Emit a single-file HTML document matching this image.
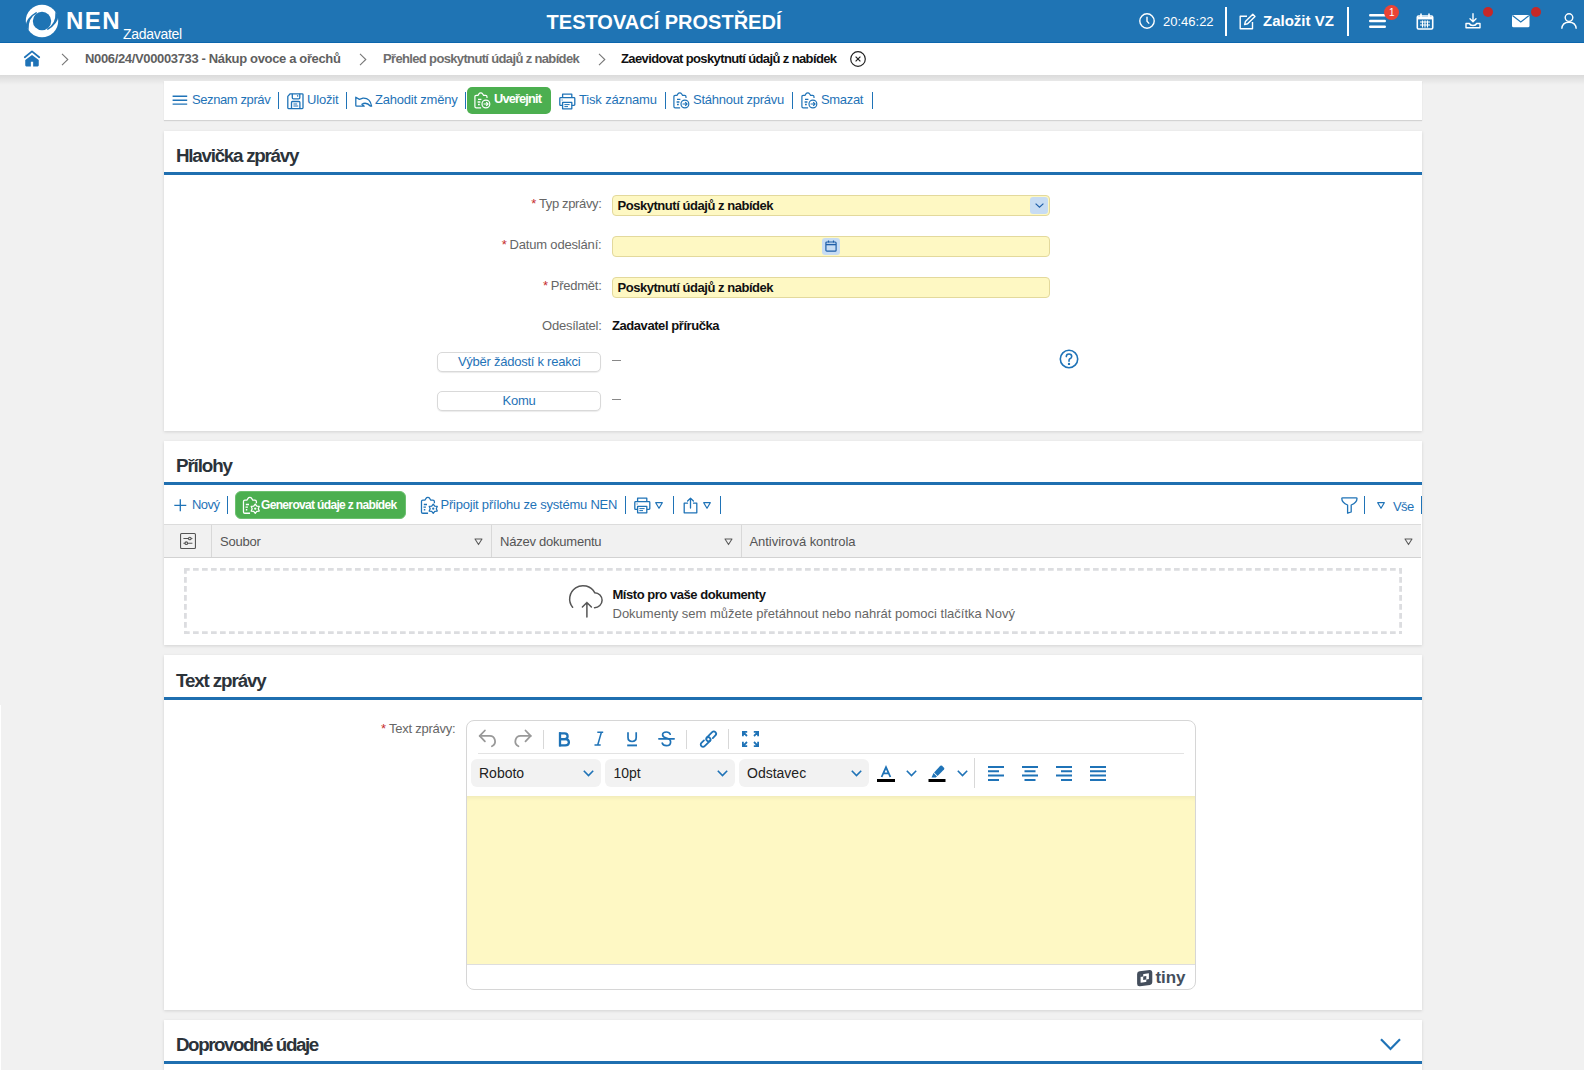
<!DOCTYPE html>
<html><head><meta charset="utf-8">
<style>
*{box-sizing:border-box}
html,body{margin:0;padding:0}
body{width:1584px;height:1070px;overflow:hidden;background:#f1f1f1;font-family:"Liberation Sans",sans-serif;position:relative}
.a{position:absolute}
.t{position:absolute;white-space:nowrap;line-height:1}
svg{position:absolute;overflow:visible}
#hdr{left:0;top:0;width:1584px;height:43px;background:#1f74b4;border-bottom:1px solid #0b66ad}
#bc{left:0;top:43px;width:1584px;height:32px;background:#fff}
#bcsh{left:0;top:75px;width:1584px;height:10px;background:linear-gradient(rgba(0,0,0,.095),rgba(0,0,0,0))}
.panel{position:absolute;left:164px;width:1258px;background:#fff;box-shadow:0 1px 3px rgba(0,0,0,.13)}
.ptitle{position:absolute;left:12px;top:0;white-space:nowrap;line-height:1;font-size:18.8px;font-weight:bold;color:#2c333a;letter-spacing:-0.7px}
.pline{position:absolute;left:0;top:41px;width:100%;height:3px;background:#1f6fb0}
.blue{color:#1f73b7}
.tb{font-size:13px;color:#1f73b7}
.vd{position:absolute;width:1.2px;background:#1f73b7}
.lbl{font-size:13px;color:#666}
.ast{color:#c62d2d;font-size:13px;margin-right:3px;position:relative;top:0}
.inp{position:absolute;left:612px;width:438px;height:21px;background:#fef8c3;border:1px solid #e3d99c;border-radius:4px}
.ival{left:617.5px;font-size:13px;font-weight:bold;color:#111;letter-spacing:-0.46px}
.btn{position:absolute;left:436.8px;width:164.6px;height:20px;border:1px solid #d9d9d9;border-radius:5px;background:#fff;box-shadow:0 1px 1px rgba(0,0,0,.08);font-size:13px;color:#1f73b7;text-align:center;line-height:17px;letter-spacing:-0.25px;white-space:nowrap}
.th{font-size:13px;color:#555}
.sel{position:absolute;top:758.5px;height:28.5px;background:#f2f2f2;border-radius:6px}
.ed{top:765.8px;font-size:14px;color:#222}
.chev{position:absolute;top:769.5px;fill:none;stroke:#1f73b7;stroke-width:1.6}
</style></head><body>
<div id="hdr" class="a">
  <svg style="left:25px;top:4px" width="34" height="34" viewBox="0 0 34 34">
    <circle cx="17" cy="17" r="16.2" fill="#fff"/>
    <circle cx="17" cy="17" r="9.2" fill="#1f74b4"/>
    <path d="M0.5 22.3Q1.15 14.05 11.2 8.1L12.3 9.1Q2.9 13.65 3.6 26.3Z" fill="#1f74b4"/>
    <path d="M33.5 11.7Q32.85 19.95 22.8 25.9L21.7 24.9Q31.1 20.35 30.4 7.7Z" fill="#1f74b4"/>
  </svg>
  <div class="t" style="left:66px;top:8.7px;font-size:24px;font-weight:bold;color:#fff;letter-spacing:1.5px">NEN</div>
  <div class="t" style="left:123px;top:27.4px;font-size:14px;color:#fff;letter-spacing:-0.3px">Zadavatel</div>
  <div class="t" style="left:546.6px;top:11.5px;font-size:20px;font-weight:bold;color:#fff">TESTOVACÍ PROSTŘEDÍ</div>
  <!-- clock -->
  <svg style="left:1139px;top:13px" width="16" height="16" viewBox="0 0 16 16" fill="none" stroke="#fff" stroke-width="1.4">
    <circle cx="8" cy="8" r="7.2"/><path d="M8 3.8V8.2L10.2 10.6"/>
  </svg>
  <div class="t" style="left:1163px;top:14.7px;font-size:13px;color:#fff">20:46:22</div>
  <div class="a" style="left:1225px;top:7px;width:2px;height:29px;background:#fff"></div>
  <svg style="left:1239px;top:13px" width="17" height="17" viewBox="0 0 17 17" fill="none" stroke="#fff" stroke-width="1.4" stroke-linejoin="round">
    <path d="M8 3.2H1.2V15.8H13.5V9"/><path d="M13.8 1.2L16 3.4L8.6 10.8L5.6 11.6L6.4 8.6Z"/>
  </svg>
  <div class="t" style="left:1263px;top:13px;font-size:15px;font-weight:bold;color:#fff">Založit VZ</div>
  <div class="a" style="left:1347px;top:7px;width:2px;height:29px;background:#fff"></div>
  <!-- menu -->
  <svg style="left:1369px;top:14px" width="17" height="14" viewBox="0 0 17 14" stroke="#fff" stroke-width="2.4" stroke-linecap="round">
    <path d="M1.2 1.3H15.8M1.2 7H15.8M1.2 12.7H15.8"/>
  </svg>
  <div class="a" style="left:1384.2px;top:5.2px;width:15px;height:15px;border-radius:50%;background:#ea4335;color:#fff;font-size:10px;font-weight:normal;text-align:center;line-height:15px">1</div>
  <!-- calendar -->
  <svg style="left:1416px;top:13px" width="18" height="17" viewBox="0 0 18 17" fill="none" stroke="#fff">
    <rect x="1.3" y="3" width="15.4" height="13" rx="1.2" stroke-width="1.6"/>
    <path d="M5 0.5V4M13 0.5V4" stroke-width="1.6"/>
    <path d="M1.5 5.2H16.5" stroke-width="2.4"/>
    <path d="M4 9H14M4 12H14M6.5 7.5V14.5M9 7.5V14.5M11.5 7.5V14.5" stroke-width="1.1"/>
  </svg>
  <!-- download -->
  <svg style="left:1465px;top:13px" width="16" height="16" viewBox="0 0 16 16" fill="none" stroke="#fff" stroke-width="1.4" stroke-linecap="round" stroke-linejoin="round">
    <path d="M8 0.8V8.5M5 5.8L8 8.8L11 5.8"/><path d="M1 10.5V14.8H15V10.5H11.5Q11 12.5 8 12.5Q5 12.5 4.5 10.5H1"/>
  </svg>
  <div class="a" style="left:1483px;top:7px;width:10px;height:10px;border-radius:50%;background:#c62828"></div>
  <!-- mail -->
  <svg style="left:1511.5px;top:14.8px" width="18" height="12.5" viewBox="0 0 18 12.5">
    <rect x="0" y="0" width="17.5" height="12.2" rx="1.5" fill="#fff"/>
    <path d="M0.8 0.8L8.75 7L16.7 0.8" stroke="#1f74b4" stroke-width="1.2" fill="none"/>
  </svg>
  <div class="a" style="left:1531px;top:7px;width:10px;height:10px;border-radius:50%;background:#c62828"></div>
  <!-- user -->
  <svg style="left:1561px;top:13px" width="16" height="16" viewBox="0 0 16 16" fill="none" stroke="#fff" stroke-width="1.4">
    <circle cx="8" cy="4.6" r="3.8"/><path d="M0.8 15.8Q1.2 9.2 8 9.2Q14.8 9.2 15.2 15.8"/>
  </svg>
</div>

<div id="bc" class="a">
  <svg style="left:24px;top:7px" width="17" height="17" viewBox="0 0 17 17">
    <path d="M0.8 7.2L8 1.4L15.2 7.2" stroke="#1f73b7" stroke-width="1.8" fill="none" stroke-linecap="round" stroke-linejoin="round"/>
    <path d="M1.25 10.1L8 5.1L14.75 10.1V15.3Q14.75 16.4 13.7 16.4H9.15V11.8H6.85V16.4H2.3Q1.25 16.4 1.25 15.3Z" fill="#1f73b7"/>
  </svg>
  <svg style="left:61px;top:10px" width="8" height="13" viewBox="0 0 8 13" fill="none" stroke="#777" stroke-width="1.1"><path d="M1 0.8L6.8 6.5L1 12.2"/></svg>
  <div class="t" style="left:85px;top:8.9px;font-size:13px;font-weight:bold;color:#5f5f5f;letter-spacing:-0.35px">N006/24/V00003733 - Nákup ovoce a ořechů</div>
  <svg style="left:359px;top:10px" width="8" height="13" viewBox="0 0 8 13" fill="none" stroke="#777" stroke-width="1.1"><path d="M1 0.8L6.8 6.5L1 12.2"/></svg>
  <div class="t" style="left:383px;top:8.9px;font-size:13px;font-weight:bold;color:#6e6e6e;letter-spacing:-0.65px">Přehled poskytnutí údajů z nabídek</div>
  <svg style="left:597.5px;top:10px" width="8" height="13" viewBox="0 0 8 13" fill="none" stroke="#777" stroke-width="1.1"><path d="M1 0.8L6.8 6.5L1 12.2"/></svg>
  <div class="t" style="left:621px;top:8.9px;font-size:13px;font-weight:bold;color:#111;letter-spacing:-0.62px">Zaevidovat poskytnutí údajů z nabídek</div>
  <svg style="left:850px;top:8px" width="16" height="16" viewBox="0 0 16 16" fill="none" stroke="#222" stroke-width="1.2"><circle cx="8" cy="8" r="7.3"/><path d="M5.6 5.6L10.4 10.4M10.4 5.6L5.6 10.4"/></svg>
</div>

<div id="bcsh" class="a"></div>
<!-- toolbar panel -->
<div class="panel" style="top:81px;height:39px;box-shadow:0 1px 1px rgba(0,0,0,.12)"></div>
<svg style="left:172px;top:95px" width="16" height="11" viewBox="0 0 16 11" stroke="#1f73b7" stroke-width="1.4"><path d="M0.6 1.3H15.2M0.6 5.2H15.2M0.6 9.1H15.2"/></svg>
<div class="t tb" style="left:192px;top:93px;letter-spacing:-0.4px">Seznam zpráv</div>
<div class="vd" style="left:278px;top:92px;height:16.6px"></div>
<svg style="left:287px;top:92.5px" width="17" height="17" viewBox="0 0 17 17" fill="none" stroke="#1f73b7" stroke-width="1.3" stroke-linejoin="round">
  <path d="M0.8 3.4L3.2 0.8H15.2Q16 0.8 16 1.6V14.8Q16 15.6 15.2 15.6H1.6Q0.8 15.6 0.8 14.8Z"/>
  <path d="M5.3 0.8V4.8Q5.3 5.8 6.3 5.8H11.8Q12.8 5.8 12.8 4.8V0.8"/>
  <path d="M10.6 2.2V3.6"/>
  <path d="M4.5 15.6V9.4Q4.5 8.5 5.4 8.5H12Q12.9 8.5 12.9 9.4V15.6"/>
  <path d="M6.4 11H10.2M6.4 13H11.2" stroke-width="1.1"/>
</svg>
<div class="t tb" style="left:307px;top:93px;letter-spacing:-0.2px">Uložit</div>
<div class="vd" style="left:346px;top:92px;height:16.6px"></div>
<svg style="left:354.5px;top:95.5px" width="18" height="11" viewBox="0 0 18 11" fill="none" stroke="#1f73b7" stroke-width="1.3" stroke-linejoin="round">
  <path d="M0.8 1.2V9.4Q0.8 10.2 1.6 10.2H9.2L6.9 8.2Q11.4 5.6 15.6 10.2H16.6Q15.2 1.8 8 2.2L4.4 3.4Z"/>
</svg>
<div class="t tb" style="left:375px;top:93px;letter-spacing:-0.21px">Zahodit změny</div>
<div class="vd" style="left:464.8px;top:92px;height:16.6px"></div>
<div class="a" style="left:466.5px;top:87px;width:84px;height:26.5px;border-radius:5px;background:#4caf50"></div>
<svg style="left:472.5px;top:91.3px" width="18" height="18" viewBox="0 0 18 17" fill="none" stroke="#fff" stroke-width="1.2" stroke-linejoin="round">
  <path d="M8.1 16.3H3.2Q1.9 16.3 1.9 15V5.2Q1.9 3.9 3.2 3.9H5L6.1 2.2Q6.6 1.4 7.8 1.4Q9 1.4 9.5 2.2L10.6 3.9H12.6Q14 3.9 14 5.3V6.6"/>
  <path d="M7.8 3.5V3.6" stroke-width="1.2"/>
  <path d="M5 7.9H8.4M4.6 10.5H7.4M5 13H6.8" stroke-width="1.4"/>
  <circle cx="12.9" cy="12.5" r="3.9"/><path d="M10.6 12.5H15.2M13.2 10.6L15.1 12.5L13.2 14.4" stroke-width="1.1"/>
</svg>
<div class="t" style="left:494px;top:93.1px;font-size:12.8px;font-weight:bold;color:#fff;letter-spacing:-0.85px">Uveřejnit</div>
<svg style="left:559px;top:92.5px" width="17" height="17" viewBox="0 0 17 17" fill="none" stroke="#1f73b7" stroke-width="1.3" stroke-linejoin="round">
  <path d="M3.6 4.6V1.2H12.8V4.6"/>
  <path d="M3.6 12.4H1.6Q0.8 12.4 0.8 11.6V5.4Q0.8 4.6 1.6 4.6H15Q15.8 4.6 15.8 5.4V11.6Q15.8 12.4 15 12.4H12.8"/>
  <path d="M3.6 9.4H12.8V15.8H3.6Z"/><path d="M5.4 11.6H10.6M5.4 13.6H9" stroke-width="1"/><path d="M2.6 7H3.6" stroke-width="1"/>
</svg>
<div class="t tb" style="left:579px;top:93px;letter-spacing:-0.16px">Tisk záznamu</div>
<div class="vd" style="left:665px;top:92px;height:16.6px"></div>
<svg style="left:672px;top:91.3px" width="18" height="18" viewBox="0 0 18 17" fill="none" stroke="#1f73b7" stroke-width="1.2" stroke-linejoin="round">
  <path d="M8.1 16.3H3.2Q1.9 16.3 1.9 15V5.2Q1.9 3.9 3.2 3.9H5L6.1 2.2Q6.6 1.4 7.8 1.4Q9 1.4 9.5 2.2L10.6 3.9H12.6Q14 3.9 14 5.3V6.6"/>
  <path d="M7.8 3.5V3.6" stroke-width="1.2"/>
  <path d="M5 7.9H8.4M4.6 10.5H7.4M5 13H6.8" stroke-width="1.4"/>
  <circle cx="12.9" cy="12.5" r="3.9"/><path d="M10.6 12.5H15.2M13.2 10.6L15.1 12.5L13.2 14.4" stroke-width="1.1"/>
</svg>
<div class="t tb" style="left:693px;top:93px;letter-spacing:-0.24px">Stáhnout zprávu</div>
<div class="vd" style="left:792px;top:92px;height:16.6px"></div>
<svg style="left:799.5px;top:91.3px" width="18" height="18" viewBox="0 0 18 17" fill="none" stroke="#1f73b7" stroke-width="1.2" stroke-linejoin="round">
  <path d="M8.1 16.3H3.2Q1.9 16.3 1.9 15V5.2Q1.9 3.9 3.2 3.9H5L6.1 2.2Q6.6 1.4 7.8 1.4Q9 1.4 9.5 2.2L10.6 3.9H12.6Q14 3.9 14 5.3V6.6"/>
  <path d="M7.8 3.5V3.6" stroke-width="1.2"/>
  <path d="M5 7.9H8.4M4.6 10.5H7.4M5 13H6.8" stroke-width="1.4"/>
  <circle cx="12.9" cy="12.5" r="3.9"/><path d="M10.6 12.5H15.2M13.2 10.6L15.1 12.5L13.2 14.4" stroke-width="1.1"/>
</svg>
<div class="t tb" style="left:821px;top:93px;letter-spacing:-0.32px">Smazat</div>
<div class="vd" style="left:871.5px;top:92px;height:16.6px"></div>

<!-- panel 1 -->
<div class="panel" style="top:131px;height:300px"><div class="pline"></div></div>
<div class="t ptitle" style="left:176px;top:146.6px;letter-spacing:-1.25px">Hlavička zprávy</div>
<div class="t lbl" style="right:982.5px;top:196.9px;letter-spacing:-0.35px"><span class="ast">*</span>Typ zprávy:</div>
<div class="t lbl" style="right:982.5px;top:237.7px;letter-spacing:-0.18px"><span class="ast">*</span>Datum odeslání:</div>
<div class="t lbl" style="right:982.5px;top:278.5px;letter-spacing:-0.25px"><span class="ast">*</span>Předmět:</div>
<div class="t lbl" style="right:982.5px;top:318.9px;letter-spacing:-0.25px">Odesílatel:</div>
<div class="inp" style="top:195px"></div>
<div class="inp" style="top:236px"></div>
<div class="inp" style="top:277px"></div>
<div class="a" style="left:1030px;top:197px;width:18px;height:17px;border-radius:3px;background:#c7dcf3"></div>
<svg style="left:1035px;top:203px" width="9" height="5" viewBox="0 0 9 5" fill="none" stroke="#1f5fa8" stroke-width="1.2"><path d="M0.6 0.6L4.5 4.2L8.4 0.6"/></svg>
<div class="a" style="left:822px;top:238px;width:18px;height:17px;border-radius:3px;background:#c7dcf3"></div>
<svg style="left:825px;top:240px" width="12" height="12" viewBox="0 0 12 12" fill="none" stroke="#1f5fa8" stroke-width="1.2"><rect x="0.9" y="2" width="10.2" height="9.2" rx="1"/><path d="M1 4.6H11" stroke-width="1.4"/><path d="M3.5 0.4V2.6M8.5 0.4V2.6"/></svg>
<div class="t ival" style="top:198.7px">Poskytnutí údajů z nabídek</div>
<div class="t ival" style="top:281px">Poskytnutí údajů z nabídek</div>
<div class="t" style="left:612px;top:318.9px;font-size:13px;font-weight:bold;color:#111;letter-spacing:-0.43px">Zadavatel příručka</div>
<div class="btn" style="top:352px">Výběr žádostí k reakci</div>
<div class="btn" style="top:391px">Komu</div>
<div class="a" style="left:612px;top:360px;width:9px;height:1px;background:#888"></div>
<div class="a" style="left:612px;top:399px;width:9px;height:1px;background:#888"></div>
<svg style="left:1059px;top:349px" width="20" height="20" viewBox="0 0 20 20" fill="none" stroke="#1f73b7" stroke-width="1.6"><circle cx="10" cy="10" r="8.7"/><path d="M7.3 7.6Q7.3 5 10 5Q12.7 5 12.7 7.4Q12.7 9 10.9 9.8Q10 10.3 10 11.8V12.2" stroke-linecap="round"/><circle cx="10" cy="14.9" r="0.5" fill="#1f73b7" stroke-width="1.4"/></svg>
<!-- panel 2 -->
<div class="panel" style="top:441px;height:204px"><div class="pline"></div></div>
<div class="t ptitle" style="left:176px;top:457.2px;letter-spacing:-1.12px">Přílohy</div>
<svg style="left:173.5px;top:498.5px" width="13" height="13" viewBox="0 0 13 13" stroke="#1f73b7" stroke-width="1.3"><path d="M6.3 0.3V12.3M0.3 6.3H12.3"/></svg>
<div class="t tb" style="left:192px;top:498.2px;letter-spacing:-0.58px">Nový</div>
<div class="vd" style="left:227px;top:496px;height:17.5px"></div>
<div class="a" style="left:234.5px;top:491px;width:171px;height:27.5px;border-radius:6px;background:#4caf50;border:1px solid #6cc06f"></div>
<svg style="left:241.5px;top:496px" width="18" height="18" viewBox="0 0 17 17" fill="none" stroke="#fff" stroke-width="1.2" stroke-linejoin="round">
  <path d="M7.6 16.3H2.7Q1.4 16.3 1.4 15V5.3Q1.4 4 2.7 4H4.6L5.7 2.2Q6.2 1.4 7.4 1.4Q8.6 1.4 9.1 2.2L10.2 4H12.2Q13.6 4 13.6 5.4V6.8"/>
  <path d="M7.4 3.5V3.6" stroke-width="1.2"/>
  <path d="M3.6 8H6.6M3.3 10.5H5.6M3.6 13H5" stroke-width="1.4"/>
  <path d="M12.50 7.60 L13.95 9.49 L16.31 9.80 L15.40 12.00 L16.31 14.20 L13.95 14.51 L12.50 16.40 L11.05 14.51 L8.69 14.20 L9.60 12.00 L8.69 9.80 L11.05 9.49Z" stroke-width="1.2"/><circle cx="12.5" cy="12" r="1.1" fill="#fff" stroke="none"/>
</svg>
<div class="t" style="left:261px;top:499px;font-size:12px;font-weight:bold;color:#fff;letter-spacing:-0.66px">Generovat údaje z nabídek</div>
<svg style="left:420px;top:496px" width="18" height="18" viewBox="0 0 17 17" fill="none" stroke="#1f73b7" stroke-width="1.2" stroke-linejoin="round">
  <path d="M7.6 16.3H2.7Q1.4 16.3 1.4 15V5.3Q1.4 4 2.7 4H4.6L5.7 2.2Q6.2 1.4 7.4 1.4Q8.6 1.4 9.1 2.2L10.2 4H12.2Q13.6 4 13.6 5.4V6.8"/>
  <path d="M7.4 3.5V3.6" stroke-width="1.2"/>
  <path d="M3.6 8H6.6M3.3 10.5H5.6M3.6 13H5" stroke-width="1.4"/>
  <path d="M12.50 7.60 L13.95 9.49 L16.31 9.80 L15.40 12.00 L16.31 14.20 L13.95 14.51 L12.50 16.40 L11.05 14.51 L8.69 14.20 L9.60 12.00 L8.69 9.80 L11.05 9.49Z" stroke-width="1.2"/><circle cx="12.5" cy="12" r="1.1" fill="#1f73b7" stroke="none"/>
</svg>
<div class="t tb" style="left:440.5px;top:498.2px;letter-spacing:-0.22px">Připojit přílohu ze systému NEN</div>
<div class="vd" style="left:625px;top:496px;height:17.5px"></div>
<svg style="left:633.5px;top:496.8px" width="17" height="17" viewBox="0 0 17 17" fill="none" stroke="#1f73b7" stroke-width="1.3" stroke-linejoin="round">
  <path d="M3.6 4.6V1.2H12.8V4.6"/>
  <path d="M3.6 12.4H1.6Q0.8 12.4 0.8 11.6V5.4Q0.8 4.6 1.6 4.6H15Q15.8 4.6 15.8 5.4V11.6Q15.8 12.4 15 12.4H12.8"/>
  <path d="M3.6 9.4H12.8V15.8H3.6Z"/><path d="M5.4 11.6H10.6M5.4 13.6H9" stroke-width="1"/><path d="M2.6 7H3.6" stroke-width="1"/>
</svg>
<svg style="left:654.5px;top:501.5px" width="8" height="7" viewBox="0 0 8 7" fill="none" stroke="#1f73b7" stroke-width="1.2" stroke-linejoin="round"><path d="M0.7 0.7H7.3L4 6.3Z"/></svg>
<div class="vd" style="left:673px;top:496px;height:17.5px"></div>
<svg style="left:683px;top:496.5px" width="15" height="17" viewBox="0 0 15 17" fill="none" stroke="#1f73b7" stroke-width="1.3" stroke-linejoin="round" stroke-linecap="round">
  <path d="M4.5 6.2H1.2V15.8H13.8V6.2H10.5"/><path d="M7.5 11V1.2M4.6 4L7.5 1.1L10.4 4"/>
</svg>
<svg style="left:702.5px;top:501.5px" width="8" height="7" viewBox="0 0 8 7" fill="none" stroke="#1f73b7" stroke-width="1.2" stroke-linejoin="round"><path d="M0.7 0.7H7.3L4 6.3Z"/></svg>
<div class="vd" style="left:720px;top:496px;height:17.5px"></div>
<svg style="left:1340.5px;top:496.5px" width="17" height="17" viewBox="0 0 17 17" fill="none" stroke="#1f73b7" stroke-width="1.3" stroke-linejoin="round">
  <path d="M0.8 1.5Q0.8 0.8 1.6 0.8H15.2Q16 0.8 16 1.5Q16 5.5 10.2 8V15L6.6 16.2V8Q0.8 5.5 0.8 1.5Z"/>
</svg>
<div class="vd" style="left:1364px;top:496px;height:18px"></div>
<svg style="left:1377px;top:501.5px" width="8" height="7" viewBox="0 0 8 7" fill="none" stroke="#1f73b7" stroke-width="1.2" stroke-linejoin="round"><path d="M0.7 0.7H7.3L4 6.3Z"/></svg>
<div class="t tb" style="left:1393px;top:499.8px;letter-spacing:-0.6px">Vše</div>
<div class="vd" style="left:1420.5px;top:496px;height:18px"></div>
<!-- table header -->
<div class="a" style="left:164px;top:524px;width:1257px;height:34px;background:#f1f1f1;border-top:1px solid #dcdcdc;border-bottom:1px solid #d2d2d2"></div>
<div class="a" style="left:211px;top:525px;width:1px;height:32px;background:#d8d8d8"></div>
<div class="a" style="left:491px;top:525px;width:1px;height:32px;background:#d8d8d8"></div>
<div class="a" style="left:741px;top:525px;width:1px;height:32px;background:#d8d8d8"></div>
<svg style="left:179.8px;top:532.6px" width="16" height="16" viewBox="0 0 16 16" fill="none" stroke="#555" stroke-width="1.1">
  <rect x="0.55" y="0.55" width="14.9" height="14.9" rx="1"/><path d="M3.4 5.5H12.4M3.4 10.2H12.4"/><circle cx="9.8" cy="5.5" r="1.3" fill="#f1f1f1"/><circle cx="6.3" cy="10.2" r="1.3" fill="#f1f1f1"/>
</svg>
<div class="t th" style="left:220px;top:534.8px;letter-spacing:-0.2px">Soubor</div>
<div class="t th" style="left:500px;top:534.8px;letter-spacing:-0.23px">Název dokumentu</div>
<div class="t th" style="left:749.5px;top:534.8px;letter-spacing:-0.05px">Antivirová kontrola</div>
<svg style="left:473.5px;top:537.5px" width="9" height="8" viewBox="0 0 9 8" fill="none" stroke="#5a5a5a" stroke-width="1.05" stroke-linejoin="round"><path d="M1 0.9H8L4.5 6.6Z"/></svg>
<svg style="left:723.5px;top:537.5px" width="9" height="8" viewBox="0 0 9 8" fill="none" stroke="#5a5a5a" stroke-width="1.05" stroke-linejoin="round"><path d="M1 0.9H8L4.5 6.6Z"/></svg>
<svg style="left:1403.5px;top:537.5px" width="9" height="8" viewBox="0 0 9 8" fill="none" stroke="#5a5a5a" stroke-width="1.05" stroke-linejoin="round"><path d="M1 0.9H8L4.5 6.6Z"/></svg>
<!-- dropzone -->
<svg style="left:184px;top:568px" width="1218" height="66" viewBox="0 0 1218 66" fill="none" stroke="#dcdde0" stroke-width="2.8" stroke-dasharray="5.7 3.3">
  <path d="M0 1.4H1218M1.4 0V66M0 64.6H1218M1216.6 0V66"/>
</svg>
<svg style="left:569px;top:584.5px" width="34" height="33" viewBox="0 0 34 33" fill="none" stroke="#555" stroke-width="1.5" stroke-linecap="round">
  <path d="M3.6 22.3A13.3 13.3 0 1 1 25.7 7.7A7.5 7.5 0 0 1 25.5 22.7"/>
  <path d="M17.9 32V17.5M13.4 22L17.9 17.5L22.4 22"/>
</svg>
<div class="t" style="left:612.5px;top:587.9px;font-size:13px;font-weight:bold;color:#111;letter-spacing:-0.46px">Místo pro vaše dokumenty</div>
<div class="t" style="left:612.5px;top:607.3px;font-size:13px;color:#666">Dokumenty sem můžete přetáhnout nebo nahrát pomoci tlačítka Nový</div>
<!-- panel 3 -->
<div class="panel" style="top:655px;height:355px"><div class="pline" style="top:42px"></div></div>
<div class="t ptitle" style="left:176px;top:672.3px;letter-spacing:-1.12px">Text zprávy</div>
<div class="t lbl" style="right:1128.5px;top:722.3px;letter-spacing:-0.23px"><span class="ast">*</span>Text zprávy:</div>
<!-- editor -->
<div class="a" style="left:466px;top:720px;width:730px;height:270px;border:1px solid #d6d6d6;border-radius:8px;background:#fff;overflow:hidden">
  <div class="a" style="left:0;top:75px;width:728px;height:169px;background:#fef8c4;box-shadow:inset 0 4px 4px -2px rgba(0,0,0,.06)"></div>
  <div class="a" style="left:0;top:243px;width:728px;height:1px;background:#dedede"></div>
</div>
<div class="a" style="left:478px;top:753px;width:706px;height:1px;background:#e3e3e3"></div>
<svg style="left:478px;top:729px" width="19" height="19" viewBox="0 0 19 19" fill="none" stroke="#999" stroke-width="1.8" stroke-linecap="round" stroke-linejoin="round"><path d="M6.9 1.5L1.7 6.9L6.9 12.3"/><path d="M1.7 6.9H11.3A5.4 5.4 0 0 1 13.9 17.2"/></svg>
<svg style="left:513.8px;top:729px" width="19" height="19" viewBox="0 0 19 19" fill="none" stroke="#999" stroke-width="1.8" stroke-linecap="round" stroke-linejoin="round"><path d="M11.5 1.5L16.7 6.9L11.5 12.3"/><path d="M16.7 6.9H7.1A5.4 5.4 0 0 0 4.5 17.2"/></svg>
<div class="a" style="left:542.5px;top:729.5px;width:1px;height:19px;background:#d8d8d8"></div>
<svg style="left:558px;top:731.6px" width="13" height="16" viewBox="0 0 13 16" fill="none" stroke="#1f73b7" stroke-width="2.3"><path d="M2 0.3V14.4"/><path d="M1 1.3H6.6Q9.6 1.3 9.6 4.2Q9.6 7.1 6.6 7.1H2"/><path d="M2 7.1H7.2Q10.9 7.1 10.9 10.2Q10.9 13.3 7.2 13.3H1"/></svg>
<svg style="left:593.5px;top:731.3px" width="10" height="15" viewBox="0 0 10 15" fill="none" stroke="#1f73b7" stroke-width="1.5"><path d="M3.3 1.2H9.2M0.5 14H6.7M7.4 1.2L3.7 14"/></svg>
<svg style="left:626px;top:731.5px" width="12" height="15" viewBox="0 0 12 15" fill="none" stroke="#1f73b7" stroke-width="1.7"><path d="M2 0.3V5.6Q2 9.5 6.1 9.5Q10.2 9.5 10.2 5.6V0.3"/><path d="M1.2 13.4H11" stroke-width="1.9"/></svg>
<svg style="left:657.5px;top:731px" width="17" height="16" viewBox="0 0 17 16" fill="none" stroke="#1f73b7" stroke-width="1.7" stroke-linecap="round"><path d="M12.2 3.2Q11.3 1 8.4 1Q4.6 1 4.6 3.8Q4.6 6.2 8.4 7Q12.6 7.9 12.6 10.9Q12.6 14.6 8.4 14.6Q5 14.6 4.2 12"/><path d="M0.9 7.8H16.1"/></svg>
<div class="a" style="left:686px;top:729.5px;width:1px;height:19px;background:#d8d8d8"></div>
<svg style="left:697.6px;top:728.6px" width="21" height="21" viewBox="0 0 21 21" fill="none" stroke="#1f73b7" stroke-width="1.8" stroke-linecap="round"><path d="M14.82 9.04L17.4 6.46A2.3 2.3 0 0 0 14.14 3.2L8.98 8.36A2.3 2.3 0 0 0 12.24 11.62"/><path d="M5.98 11.36L3.4 13.94A2.3 2.3 0 0 0 6.66 17.2L11.82 12.04A2.3 2.3 0 0 0 8.56 8.78"/></svg>
<div class="a" style="left:727.8px;top:729px;width:1px;height:20px;background:#d8d8d8"></div>
<svg style="left:742px;top:731px" width="17" height="16" viewBox="0 0 17 16" fill="none" stroke="#1f73b7" stroke-width="1.8"><path d="M0.9 5.2V0.9H5.2M0.9 0.9L5 5"/><path d="M16.1 5.2V0.9H11.8M16.1 0.9L12 5"/><path d="M0.9 10.8V15.1H5.2M0.9 15.1L5 11"/><path d="M16.1 10.8V15.1H11.8M16.1 15.1L12 11"/></svg>
<!-- row 2 -->
<div class="sel" style="left:471px;width:130px"></div>
<div class="sel" style="left:605px;width:130px"></div>
<div class="sel" style="left:739px;width:130px"></div>
<div class="t ed" style="left:479px">Roboto</div>
<div class="t ed" style="left:613.5px">10pt</div>
<div class="t ed" style="left:747px">Odstavec</div>
<svg class="chev" style="left:583px"  width="11" height="7" viewBox="0 0 11 7"><path d="M0.8 0.8L5.5 5.6L10.2 0.8"/></svg>
<svg class="chev" style="left:716.5px" width="11" height="7" viewBox="0 0 11 7"><path d="M0.8 0.8L5.5 5.6L10.2 0.8"/></svg>
<svg class="chev" style="left:851px" width="11" height="7" viewBox="0 0 11 7"><path d="M0.8 0.8L5.5 5.6L10.2 0.8"/></svg>
<svg style="left:877px;top:766px" width="18" height="16" viewBox="0 0 18 16" fill="none"><path d="M4.6 11L9 1.3L13.4 11M6.4 7.4H11.6" stroke="#1f73b7" stroke-width="1.8"/><rect x="0" y="13" width="18" height="3" fill="#000"/></svg>
<svg class="chev" style="left:905.5px" width="11" height="7" viewBox="0 0 11 7"><path d="M0.8 0.8L5.5 5.6L10.2 0.8"/></svg>
<svg style="left:928px;top:765px" width="18" height="17" viewBox="0 0 18 17"><path d="M12.3 0.8Q13.2 0 14.1 0.8L16 2.7Q16.8 3.6 16 4.5L9.6 10.9L6.1 7.4Z" fill="#1f73b7"/><path d="M5.5 8.1L9 11.6L7.6 12.6H3.5Z" fill="#1f73b7"/><rect x="0.5" y="14" width="17" height="3" fill="#000"/></svg>
<svg class="chev" style="left:956.5px" width="11" height="7" viewBox="0 0 11 7"><path d="M0.8 0.8L5.5 5.6L10.2 0.8"/></svg>
<div class="a" style="left:974px;top:757.5px;width:1px;height:30px;background:#d8d8d8"></div>
<svg style="left:988px;top:765.5px" width="16" height="15" viewBox="0 0 16 15" stroke="#1f73b7" stroke-width="2"><path d="M0 1H16M0 5.3H11M0 9.6H16M0 13.9H11"/></svg>
<svg style="left:1022px;top:765.5px" width="16" height="15" viewBox="0 0 16 15" stroke="#1f73b7" stroke-width="2"><path d="M0 1H16M2.5 5.3H13.5M0 9.6H16M2.5 13.9H13.5"/></svg>
<svg style="left:1056px;top:765.5px" width="16" height="15" viewBox="0 0 16 15" stroke="#1f73b7" stroke-width="2"><path d="M0 1H16M5 5.3H16M0 9.6H16M5 13.9H16"/></svg>
<svg style="left:1090px;top:765.5px" width="16" height="15" viewBox="0 0 16 15" stroke="#1f73b7" stroke-width="2"><path d="M0 1H16M0 5.3H16M0 9.6H16M0 13.9H16"/></svg>
<!-- tiny logo -->
<svg style="left:1137px;top:970px" width="16" height="16" viewBox="0 0 16 16"><path d="M2.6 1.2L12.6 0Q15.3 -0.3 15.3 2.5V12.3Q15.3 14.6 13 15L3 16.2Q0.1 16.5 0.1 13.7V4Q0.1 1.5 2.6 1.2Z" fill="#444e5c"/><path d="M3.6 4.6L11.9 3.2V11.4L3.6 12.8Z" fill="#fff"/><path d="M3.2 4.2L6.2 3.7V6.5L3.2 7Z" fill="#444e5c"/><path d="M9.3 9.6L12.2 9.1V11.9L9.3 12.4Z" fill="#444e5c"/><path d="M6.2 6.5L9.3 6V9.6L6.2 10.1Z" fill="#444e5c"/></svg>
<div class="t" style="left:1155.5px;top:968.5px;font-size:17px;font-weight:bold;color:#444e5c;letter-spacing:-0.1px">tiny</div>

<!-- panel 4 -->
<div class="panel" style="top:1020px;height:60px"><div class="pline"></div></div>
<div class="t ptitle" style="left:176px;top:1035.8px;letter-spacing:-1.45px">Doprovodné údaje</div>
<svg style="left:1379.5px;top:1038px" width="21" height="13" viewBox="0 0 21 13" fill="none" stroke="#1f73b7" stroke-width="2.2"><path d="M1 1.2L10.5 11L20 1.2"/></svg>
<div class="a" style="left:0;top:705px;width:1px;height:365px;background:#fff"></div>



</body></html>
